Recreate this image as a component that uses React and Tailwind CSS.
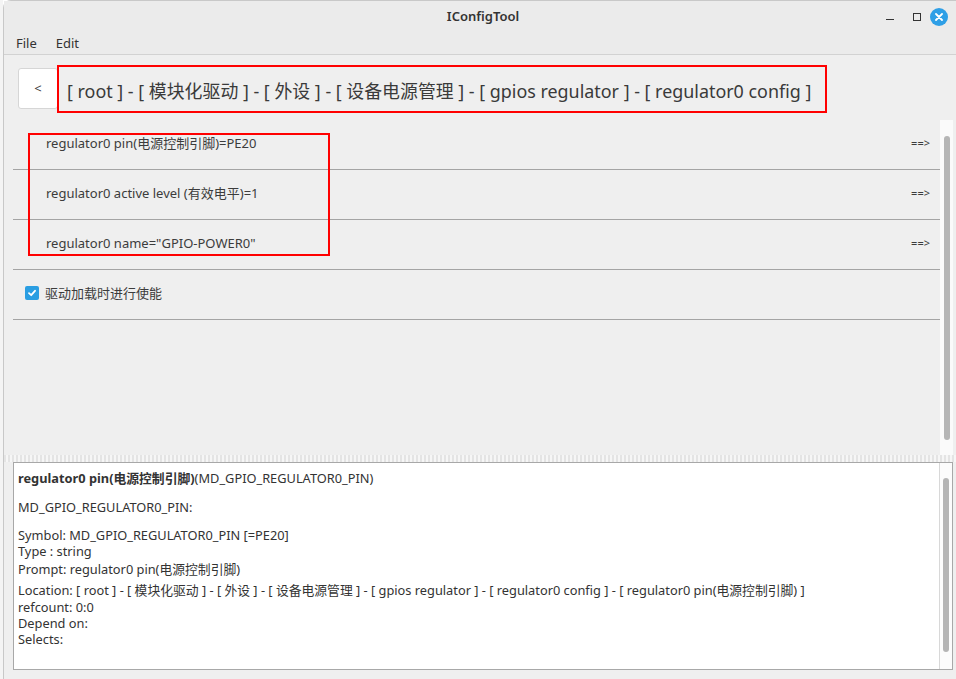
import React from "react";

const rows = [
  "regulator0 pin(电源控制引脚)=PE20",
  "regulator0 active level (有效电平)=1",
  'regulator0 name="GPIO-POWER0"',
];

const font = { fontFamily: '"Noto Sans", "Noto Sans CJK SC", sans-serif' };

export default function App() {
  return (
    <div className="flex h-[679px] w-[956px] overflow-hidden bg-white text-[#3c3c3c]" style={font}>
      {/* desktop strip on the left */}
      <div className="w-[3px] shrink-0 bg-[#f4f4f4]" />

      <div className="flex min-w-0 flex-1 flex-col rounded-tl-[8px] border-l border-t border-[#c8c8c8] bg-[#efefef]">
        {/* title bar */}
        <div className="relative flex h-[32px] shrink-0 items-center justify-center bg-[#ebebeb]">
          <span className="ml-[6px] text-[13px] font-semibold text-[#333]">IConfigTool</span>
          <div className="absolute right-0 top-0 flex h-full items-center">
            <div className="flex h-full w-[27px] items-center justify-center">
              <div className="mt-[4px] h-[1px] w-[8px] bg-[#333]" />
            </div>
            <div className="flex h-full w-[27px] items-center justify-center">
              <div className="h-[8px] w-[8px] border border-[#333]" />
            </div>
            <div className="flex h-full w-[26px] items-center justify-start">
              <div className="flex h-[18px] w-[18px] items-center justify-center rounded-full bg-[#2e9fe6]">
                <svg width="8" height="8" viewBox="0 0 8 8">
                  <path d="M1 1L7 7M7 1L1 7" stroke="white" strokeWidth="1.8" strokeLinecap="round" />
                </svg>
              </div>
            </div>
          </div>
        </div>

        {/* menu bar */}
        <div className="flex h-[22px] shrink-0 items-center gap-[19px] border-b border-[#d2d2d2] bg-[#ebebeb] pl-[12px] text-[13px] text-[#333]">
          <span>File</span>
          <span>Edit</span>
        </div>

        {/* breadcrumb */}
        <div className="flex h-[65px] shrink-0 items-center pl-[14px] pt-[2px]">
          <div className="flex h-[41px] w-[40px] items-center justify-center rounded-[3px] border border-[#d6d6d6] bg-white text-[13px]">
            &lt;
          </div>
          <div className="-ml-[1px] flex h-[48px] w-[770px] items-center whitespace-nowrap border-2 border-[#ff0000] pl-[8px] pt-[5px] text-[17.9px] text-[#3a3a3a]">
            [ root ] - [ 模块化驱动 ] - [ 外设 ] - [ 设备电源管理 ] - [ gpios regulator ] - [ regulator0 config ]
          </div>
        </div>

        {/* list + scrollbar */}
        <div className="flex h-[335px] shrink-0 pl-[9px]">
          <div className="relative flex-1">
            {rows.map((r) => (
              <div key={r} className="flex h-[50px] items-start justify-between border-b border-[#a4a4a4] pl-[33px] pr-[10px] pt-[14px] text-[13px] leading-[18px]">
                <span>{r}</span>
                <span className="text-[11px]">==&gt;</span>
              </div>
            ))}
            <div className="flex h-[50px] items-start gap-[6px] border-b border-[#a4a4a4] pl-[12px] pt-[13px] text-[13px] leading-[20px]">
              <div className="mt-[3px] flex h-[14px] w-[14px] items-center justify-center rounded-[2px] bg-[#2a9ee2]">
                <svg width="10" height="10" viewBox="0 0 10 10">
                  <path d="M2 5.2L4.2 7.2L8 2.8" stroke="white" strokeWidth="1.8" fill="none" strokeLinecap="round" strokeLinejoin="round" />
                </svg>
              </div>
              <span>驱动加载时进行使能</span>
            </div>
            <div className="pointer-events-none absolute left-[15px] top-[13px] h-[123px] w-[302px] border-2 border-[#ff0000]" />
          </div>
          <div className="flex w-[13px] justify-center bg-[#fafafa] pt-[16px]">
            <div className="h-[304px] w-[6px] rounded-full bg-[#b5b5b5]" />
          </div>
          <div className="w-[3px]" />
        </div>

        {/* splitter */}
        <div className="h-[7px] shrink-0 bg-[repeating-linear-gradient(90deg,#e4e4e4_0px,#e4e4e4_2px,#f6f6f6_2px,#f6f6f6_4px)]" />

        {/* details panel */}
        <div className="flex h-[208px] shrink-0 pr-[3px] pl-[9px]">
          <div className="flex flex-1 border border-[#a8a8a8] bg-white">
            <div className="flex-1 pl-[4px] pt-[7px] text-[12.8px] leading-[16px] text-[#333]">
              <div>
                <span className="font-bold">regulator0 pin(电源控制引脚)</span>(MD_GPIO_REGULATOR0_PIN)
              </div>
              <div className="mt-[13px]">MD_GPIO_REGULATOR0_PIN:</div>
              <div className="mt-[12px]">Symbol: MD_GPIO_REGULATOR0_PIN [=PE20]</div>
              <div>Type : string</div>
              <div className="mt-[2px]">Prompt: regulator0 pin(电源控制引脚)</div>
              <div className="mt-[5px]">
                Location: [ root ] - [ 模块化驱动 ] - [ 外设 ] - [ 设备电源管理 ] - [ gpios regulator ] - [ regulator0 config ] - [ regulator0 pin(电源控制引脚) ]
              </div>
              <div className="mt-[1px]">refcount: 0:0</div>
              <div>Depend on:</div>
              <div>Selects:</div>
            </div>
            <div className="flex w-[13px] justify-center border-l border-[#d8d8d8] bg-[#fcfcfc] pt-[15px]">
              <div className="h-[174px] w-[6px] rounded-full bg-[#b5b5b5]" />
            </div>
          </div>
        </div>

        <div className="flex-1 bg-[#efefef]" />
      </div>
    </div>
  );
}
